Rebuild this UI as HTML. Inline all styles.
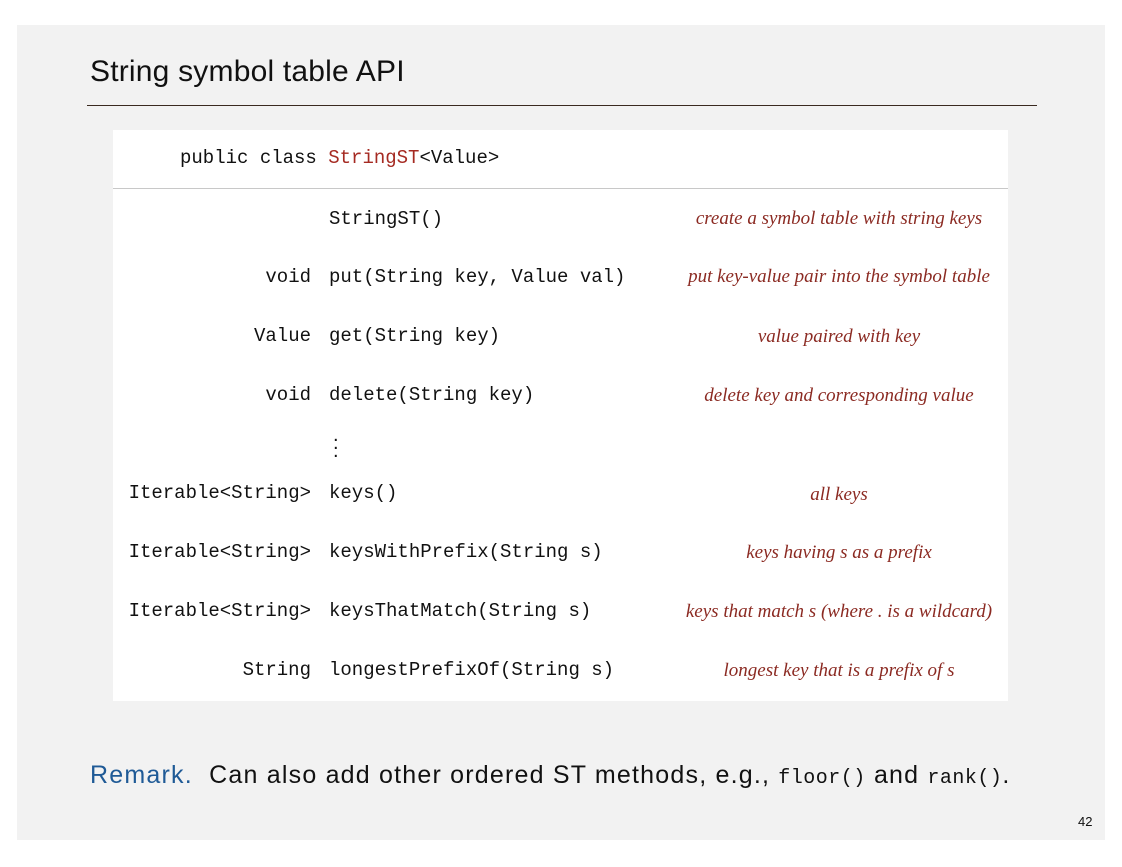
<!DOCTYPE html>
<html><head><meta charset="utf-8"><style>
body{margin:0;width:1122px;height:867px;background:#fff;position:relative;overflow:hidden}
.slide{position:absolute;left:17px;top:25px;width:1088px;height:815px;background:#f2f2f2}
.t{position:absolute;white-space:nowrap}
.m{font-family:"Liberation Mono",monospace;font-size:19px;color:#111}
.r{text-align:right;width:300px;left:11px}
.d{font-family:"Liberation Serif",serif;font-style:italic;font-size:19px;color:#8b2a22;width:400px;left:639px;text-align:center}
</style></head><body>
<div class="slide"></div>
<div class="t" style="left:90px;top:55px;font-family:'Liberation Sans',sans-serif;font-size:30px;color:#111;letter-spacing:0.2px">String symbol table API</div>
<div style="position:absolute;left:87px;top:105px;width:950px;height:1px;background:#3a2a20"></div>
<div style="position:absolute;left:113px;top:130px;width:895px;height:571px;background:#fff"></div>
<div style="position:absolute;left:113px;top:188px;width:895px;height:1px;background:#c8c8c8"></div>
<div class="t m" style="left:180px;top:147px">public class <span style="color:#a52a22">StringST</span>&lt;Value&gt;</div>

<div class="t m" style="left:329px;top:208px">StringST()</div>
<div class="t d" style="top:208px">create a symbol table with string keys</div>

<div class="t m r" style="top:266px">void</div>
<div class="t m" style="left:329px;top:266px">put(String key, Value val)</div>
<div class="t d" style="top:266px">put key-value pair into the symbol table</div>

<div class="t m r" style="top:325px">Value</div>
<div class="t m" style="left:329px;top:325px">get(String key)</div>
<div class="t d" style="top:326px">value paired with key</div>

<div class="t m r" style="top:384px">void</div>
<div class="t m" style="left:329px;top:384px">delete(String key)</div>
<div class="t d" style="top:385px">delete key and corresponding value</div>

<div class="t" style="left:333px;top:431px;font-size:20px;line-height:8px;font-family:'Liberation Sans',sans-serif;color:#111">.<br>.<br>.</div>

<div class="t m r" style="top:482px">Iterable&lt;String&gt;</div>
<div class="t m" style="left:329px;top:482px">keys()</div>
<div class="t d" style="top:484px">all keys</div>

<div class="t m r" style="top:541px">Iterable&lt;String&gt;</div>
<div class="t m" style="left:329px;top:541px">keysWithPrefix(String s)</div>
<div class="t d" style="top:542px">keys having s as a prefix</div>

<div class="t m r" style="top:600px">Iterable&lt;String&gt;</div>
<div class="t m" style="left:329px;top:600px">keysThatMatch(String s)</div>
<div class="t d" style="top:601px">keys that match s (where . is a wildcard)</div>

<div class="t m r" style="top:659px">String</div>
<div class="t m" style="left:329px;top:659px">longestPrefixOf(String s)</div>
<div class="t d" style="top:660px">longest key that is a prefix of s</div>

<div class="t" style="left:90px;top:761px;font-family:'Liberation Sans',sans-serif;font-size:25px;color:#111;letter-spacing:1.2px"><span style="color:#1f5a96">Remark.</span>&nbsp; Can also add other ordered ST methods, e.g., <span style="font-family:'Liberation Mono',monospace;font-size:20px;letter-spacing:0.5px">floor()</span> and <span style="font-family:'Liberation Mono',monospace;font-size:20px;letter-spacing:0.5px">rank()</span>.</div>
<div class="t" style="left:1078px;top:814px;font-family:'Liberation Sans',sans-serif;font-size:13px;color:#111">42</div>
</body></html>
